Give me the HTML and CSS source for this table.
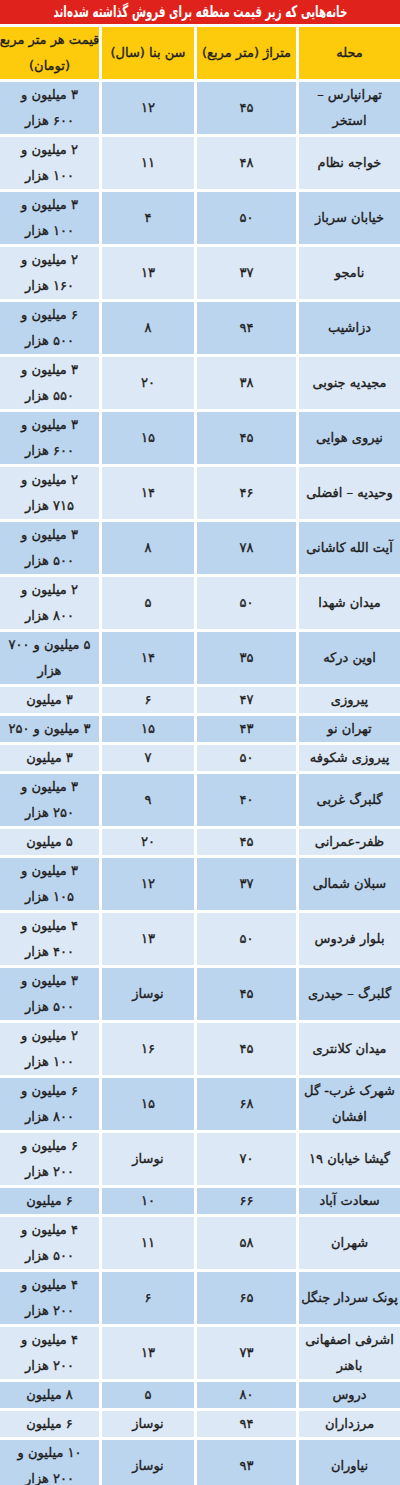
FILE: index.html
```html
<!DOCTYPE html>
<html lang="fa" dir="rtl">
<head>
<meta charset="utf-8">
<title>خانه‌هایی که زیر قیمت منطقه برای فروش گذاشته شده‌اند</title>
<link rel="stylesheet" href="styles.css">
</head>
<body>
<div class="title"><span class="title-text">خانه‌هایی که زیر قیمت منطقه برای فروش گذاشته شده‌اند</span></div>
<div class="table">
  <div class="row head">
    <div class="cell">محله</div>
    <div class="cell">متراژ (متر مربع)</div>
    <div class="cell">سن بنا (سال)</div>
    <div class="cell">قیمت هر متر مربع<br>(تومان)</div>
  </div>
  <div class="row dark"><div class="cell">تهرانپارس –<br>استخر</div><div class="cell">۴۵</div><div class="cell">۱۲</div><div class="cell">۳ میلیون و<br>۶۰۰ هزار</div></div>
  <div class="row light"><div class="cell">خواجه نظام</div><div class="cell">۴۸</div><div class="cell">۱۱</div><div class="cell">۲ میلیون و<br>۱۰۰ هزار</div></div>
  <div class="row dark"><div class="cell">خیابان سرباز</div><div class="cell">۵۰</div><div class="cell">۴</div><div class="cell">۳ میلیون و<br>۱۰۰ هزار</div></div>
  <div class="row light"><div class="cell">نامجو</div><div class="cell">۳۷</div><div class="cell">۱۳</div><div class="cell">۲ میلیون و<br>۱۶۰ هزار</div></div>
  <div class="row dark"><div class="cell">دزاشیب</div><div class="cell">۹۴</div><div class="cell">۸</div><div class="cell">۶ میلیون و<br>۵۰۰ هزار</div></div>
  <div class="row light"><div class="cell">مجیدیه جنوبی</div><div class="cell">۳۸</div><div class="cell">۲۰</div><div class="cell">۳ میلیون و<br>۵۵۰ هزار</div></div>
  <div class="row dark"><div class="cell">نیروی هوایی</div><div class="cell">۴۵</div><div class="cell">۱۵</div><div class="cell">۳ میلیون و<br>۶۰۰ هزار</div></div>
  <div class="row light"><div class="cell">وحیدیه – افضلی</div><div class="cell">۴۶</div><div class="cell">۱۴</div><div class="cell">۲ میلیون و<br>۷۱۵ هزار</div></div>
  <div class="row dark"><div class="cell">آیت الله کاشانی</div><div class="cell">۷۸</div><div class="cell">۸</div><div class="cell">۳ میلیون و<br>۵۰۰ هزار</div></div>
  <div class="row light"><div class="cell">میدان شهدا</div><div class="cell">۵۰</div><div class="cell">۵</div><div class="cell">۲ میلیون و<br>۸۰۰ هزار</div></div>
  <div class="row dark"><div class="cell">اوین درکه</div><div class="cell">۳۵</div><div class="cell">۱۴</div><div class="cell">۵ میلیون و ۷۰۰<br>هزار</div></div>
  <div class="row light"><div class="cell">پیروزی</div><div class="cell">۴۷</div><div class="cell">۶</div><div class="cell">۳ میلیون</div></div>
  <div class="row dark"><div class="cell">تهران نو</div><div class="cell">۴۳</div><div class="cell">۱۵</div><div class="cell">۳ میلیون و ۲۵۰</div></div>
  <div class="row light"><div class="cell">پیروزی شکوفه</div><div class="cell">۵۰</div><div class="cell">۷</div><div class="cell">۳ میلیون</div></div>
  <div class="row dark"><div class="cell">گلبرگ غربی</div><div class="cell">۴۰</div><div class="cell">۹</div><div class="cell">۳ میلیون و<br>۲۵۰ هزار</div></div>
  <div class="row light"><div class="cell">ظفر-عمرانی</div><div class="cell">۴۵</div><div class="cell">۲۰</div><div class="cell">۵ میلیون</div></div>
  <div class="row dark"><div class="cell">سبلان شمالی</div><div class="cell">۳۷</div><div class="cell">۱۲</div><div class="cell">۳ میلیون و<br>۱۰۵ هزار</div></div>
  <div class="row light"><div class="cell">بلوار فردوس</div><div class="cell">۵۰</div><div class="cell">۱۳</div><div class="cell">۴ میلیون و<br>۴۰۰ هزار</div></div>
  <div class="row dark"><div class="cell">گلبرگ – حیدری</div><div class="cell">۴۵</div><div class="cell">نوساز</div><div class="cell">۳ میلیون و<br>۵۰۰ هزار</div></div>
  <div class="row light"><div class="cell">میدان کلانتری</div><div class="cell">۴۵</div><div class="cell">۱۶</div><div class="cell">۲ میلیون و<br>۱۰۰ هزار</div></div>
  <div class="row dark"><div class="cell">شهرک غرب- گل<br>افشان</div><div class="cell">۶۸</div><div class="cell">۱۵</div><div class="cell">۶ میلیون و<br>۸۰۰ هزار</div></div>
  <div class="row light"><div class="cell">گیشا خیابان ۱۹</div><div class="cell">۷۰</div><div class="cell">نوساز</div><div class="cell">۶ میلیون و<br>۲۰۰ هزار</div></div>
  <div class="row dark"><div class="cell">سعادت آباد</div><div class="cell">۶۶</div><div class="cell">۱۰</div><div class="cell">۶ میلیون</div></div>
  <div class="row light"><div class="cell">شهران</div><div class="cell">۵۸</div><div class="cell">۱۱</div><div class="cell">۴ میلیون و<br>۵۰۰ هزار</div></div>
  <div class="row dark"><div class="cell">پونک سردار جنگل</div><div class="cell">۶۵</div><div class="cell">۶</div><div class="cell">۴ میلیون و<br>۲۰۰ هزار</div></div>
  <div class="row light"><div class="cell">اشرفی اصفهانی<br>باهنر</div><div class="cell">۷۳</div><div class="cell">۱۳</div><div class="cell">۴ میلیون و<br>۲۰۰ هزار</div></div>
  <div class="row dark"><div class="cell">دروس</div><div class="cell">۸۰</div><div class="cell">۵</div><div class="cell">۸ میلیون</div></div>
  <div class="row light"><div class="cell">مرزداران</div><div class="cell">۹۴</div><div class="cell">نوساز</div><div class="cell">۶ میلیون</div></div>
  <div class="row dark"><div class="cell">نیاوران</div><div class="cell">۹۳</div><div class="cell">نوساز</div><div class="cell">۱۰ میلیون و<br>۲۰۰ هزار</div></div>
</div>
</body>
</html>
```

FILE: styles.css
```css
html, body {
  margin: 0;
  padding: 0;
  background: #ffffff;
}

body {
  width: 400px;
  direction: rtl;
  font-family: "DejaVu Sans", sans-serif;
  color: #1d1d1d;
}

.title {
  height: 24px;
  background: #e0221c;
  color: #ffffff;
  font-weight: bold;
  font-size: 16px;
  line-height: 24px;
  display: flex;
  justify-content: center;
  white-space: nowrap;
  margin-bottom: 3px;
}

.title-text {
  flex: none;
  transform: scaleX(0.64);
}

.table {
  display: grid;
  grid-template-columns: 101px 99px 92px 99px;
  column-gap: 3px;
  row-gap: 3px;
}

.row {
  display: contents;
}

.cell {
  display: flex;
  align-items: center;
  justify-content: center;
  text-align: center;
  font-size: 13px;
  -webkit-text-stroke: 0.35px #1d1d1d;
  line-height: 26px;
  min-height: 26px;
  white-space: nowrap;
}

.head .cell {
  background: #fdcb0b;
  height: 52px;
}

.dark .cell {
  background: #bcd5ef;
}

.light .cell {
  background: #dce8f5;
}
```
